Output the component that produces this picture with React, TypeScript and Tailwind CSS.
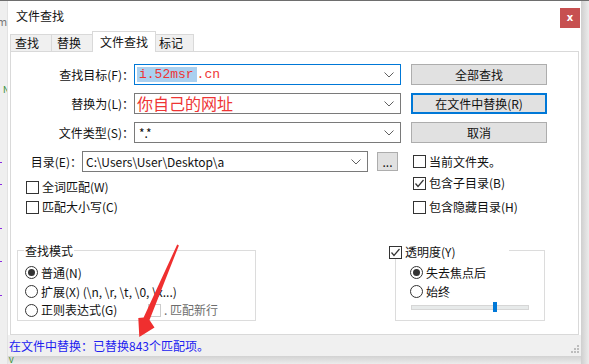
import React from "react";

const FONT = "font-['Noto_Sans_CJK_SC','Noto_Sans',sans-serif]";

function Chevron() {
  return (
    <svg width="10" height="6" viewBox="0 0 10 6" className="shrink-0">
      <polyline points="0.5,0.5 5,5 9.5,0.5" fill="none" stroke="#606060" strokeWidth="1" />
    </svg>
  );
}

function CheckBox({ checked = false, disabled = false }: { checked?: boolean; disabled?: boolean }) {
  return (
    <span
      className={`w-[13px] h-[13px] shrink-0 flex items-center justify-center bg-white border ${
        disabled ? "border-[#cccccc]" : "border-[#333333]"
      }`}
    >
      {checked && (
        <svg width="11" height="11" viewBox="0 0 11 11">
          <polyline points="1.5,5.5 4,8.5 9.5,2" fill="none" stroke="#333333" strokeWidth="1.2" />
        </svg>
      )}
    </span>
  );
}

function Radio({ checked = false }: { checked?: boolean }) {
  return (
    <span className="w-[13px] h-[13px] shrink-0 rounded-full border border-[#333333] bg-white flex items-center justify-center">
      {checked && <span className="w-[7px] h-[7px] rounded-full bg-[#333333]" />}
    </span>
  );
}

function Check({ label, checked = false }: { label: string; checked?: boolean }) {
  return (
    <div className="h-[20px] flex items-center">
      <CheckBox checked={checked} />
      <span className="ml-[3px] text-[12px] leading-[14px] text-[#111]">{label}</span>
    </div>
  );
}

function Combo({
  width,
  focused = false,
  children,
}: {
  width: string;
  focused?: boolean;
  children?: React.ReactNode;
}) {
  return (
    <div
      className={`${width} h-[21px] shrink-0 flex items-center bg-white border ${
        focused ? "border-[#0078d7]" : "border-[#7a7a7a]"
      } pl-[2px] pr-[6px]`}
    >
      <div className="flex-1 min-w-0 flex items-center whitespace-nowrap">{children}</div>
      <Chevron />
    </div>
  );
}

function Btn({ children, active = false }: { children: React.ReactNode; active?: boolean }) {
  return (
    <div
      className={`ml-[10px] w-[136px] h-[21px] shrink-0 bg-[#e1e1e1] flex items-center justify-center text-[12px] leading-[14px] text-[#111] ${
        active ? "border-2 border-[#0078d7]" : "border border-[#adadad]"
      }`}
    >
      {children}
    </div>
  );
}

export default function App() {
  return (
    <div className={`relative w-[589px] h-[364px] overflow-hidden bg-[#ececec] ${FONT}`}>
      <div className="h-px bg-[#6e6e6e]" />
      <div className="flex">
        {/* background editor strip */}
        <div className="relative w-[8px] h-[363px] bg-[#efefef] border-r border-[#e2e2e2] overflow-hidden">
          <span className="absolute left-[-3px] top-[14px] text-[11px] leading-[12px] text-[#777]">m</span>
          <span className="absolute left-[3px] top-[84px] text-[9px] leading-[10px] text-[#2a8a2a]">N</span>
          <span className="absolute left-0 top-[161px] w-[2px] h-[1px] bg-[#8a2be2]" />
          <span className="absolute left-0 top-[183px] w-[2px] h-[1px] bg-[#8a2be2]" />
          <span className="absolute left-0 top-[227px] w-[2px] h-[1px] bg-[#8a2be2]" />
          <span className="absolute left-0 top-[260px] w-[2px] h-[1px] bg-[#8a2be2]" />
          <span className="absolute left-0 top-[294px] w-[2px] h-[1px] bg-[#8a2be2]" />
        </div>

        <div className="flex flex-col">
          {/* dialog */}
          <div className="relative w-[573px] h-[355px] bg-white flex flex-col">
            {/* title bar */}
            <div className="h-[30px] flex items-start justify-between">
              <span className="ml-[8px] mt-[7px] text-[12px] leading-[16px] text-[#111]">文件查找</span>
              <div className="mt-[7px] mr-[1px] w-[20px] h-[20px] bg-[#c75050] flex items-center justify-center text-white text-[10px] font-bold leading-none font-['DejaVu_Sans',sans-serif]">
                x
              </div>
            </div>

            {/* tabs */}
            <div className="h-[20px] flex items-end pl-[2px] text-[12px] leading-[14px] text-[#111]">
              <div className="w-[41px] h-[17px] bg-[#f0f0f0] border-t border-l border-[#d9d9d9] flex items-center pl-[4px]">
                查找
              </div>
              <div className="w-[41px] h-[17px] bg-[#f0f0f0] border-t border-l border-[#d9d9d9] flex items-center pl-[5px]">
                替换
              </div>
              <div className="relative z-10 -mb-px w-[64px] h-[21px] bg-white border-t border-l border-r border-[#d9d9d9] flex items-center pl-[7px]">
                文件查找
              </div>
              <div className="w-[38px] h-[17px] bg-[#f0f0f0] border-t border-r border-[#d9d9d9] flex items-center pl-[3px]">
                标记
              </div>
            </div>

            {/* panel */}
            <div className="ml-[2px] w-[569px] h-[284px] border border-[#d9d9d9] flex flex-col pt-[12px] text-[12px] leading-[14px] text-[#111]">
              <div className="flex flex-col gap-[8px]">
                <div className="flex items-center h-[21px]">
                  <div className="w-[123px] text-right">查找目标(F)：</div>
                  <Combo width="w-[267px]" focused>
                    <span className="font-['Liberation_Mono',monospace] text-[13px] leading-[15px] text-[#ee3535]">
                      <span className="bg-[#aad0ef] pl-[2px] pr-[3px]">i.52msr</span>.cn
                    </span>
                  </Combo>
                  <Btn>全部查找</Btn>
                </div>
                <div className="flex items-center h-[21px]">
                  <div className="w-[123px] text-right">替换为(L)：</div>
                  <Combo width="w-[267px]">
                    <span className="text-[16px] leading-[17px] text-[#ee3535]">你自己的网址</span>
                  </Combo>
                  <Btn active>在文件中替换(R)</Btn>
                </div>
                <div className="flex items-center h-[21px]">
                  <div className="w-[123px] text-right">文件类型(S)：</div>
                  <Combo width="w-[267px]">
                    <span className="pl-[2px]">*.*</span>
                  </Combo>
                  <Btn>取消</Btn>
                </div>
              </div>

              {/* directory row */}
              <div className="mt-[8px] flex items-center h-[21px]">
                <div className="w-[71px] text-right">目录(E)：</div>
                <Combo width="w-[286px]">
                  <span className="pl-[1px]">C:\Users\User\Desktop\a</span>
                </Combo>
                <div className="ml-[9px] w-[21px] h-[19px] bg-[#e1e1e1] border border-[#adadad] flex items-center justify-center text-[12px] leading-none">
                  ...
                </div>
                <div className="ml-[15px]">
                  <Check label="当前文件夹。" />
                </div>
              </div>

              {/* option checkboxes */}
              <div className="flex">
                <div className="w-[402px] pl-[15px] pt-[5px] flex flex-col">
                  <Check label="全词匹配(W)" />
                  <Check label="匹配大小写(C)" />
                </div>
                <div className="pt-[1px] flex flex-col gap-[4px]">
                  <Check label="包含子目录(B)" checked />
                  <Check label="包含隐藏目录(H)" />
                </div>
              </div>

              {/* group boxes */}
              <div className="mt-[33px] flex">
                <div className="relative ml-[6px] w-[239px] h-[71px] border border-[#dcdcdc] pl-[7px] pt-[12px] flex flex-col">
                  <span className="absolute left-[6px] top-[-8px] h-[16px] leading-[16px] bg-white px-[1px]">查找模式</span>
                  <div className="h-[19px] flex items-center">
                    <Radio checked />
                    <span className="ml-[3px]">普通(N)</span>
                  </div>
                  <div className="h-[19px] flex items-center">
                    <Radio />
                    <span className="ml-[3px]">扩展(X) (\n, \r, \t, \0, \x...)</span>
                  </div>
                  <div className="h-[18px] flex items-center">
                    <div className="w-[123px] flex items-center">
                      <Radio />
                      <span className="ml-[3px]">正则表达式(G)</span>
                    </div>
                    <CheckBox disabled />
                    <span className="ml-[3px] text-[#6d6d6d]">. 匹配新行</span>
                  </div>
                </div>

                <div className="relative ml-[139px] w-[150px] h-[71px] border border-[#dcdcdc] pl-[14px] pt-[12px] flex flex-col">
                  <div className="absolute left-[-7px] top-[-6px] w-[120px] h-[14px] bg-white flex items-center">
                    <CheckBox checked />
                    <span className="ml-[3px]">透明度(Y)</span>
                  </div>
                  <div className="h-[19px] flex items-center">
                    <Radio checked />
                    <span className="ml-[3px]">失去焦点后</span>
                  </div>
                  <div className="h-[19px] flex items-center">
                    <Radio />
                    <span className="ml-[3px]">始终</span>
                  </div>
                  <div className="relative mt-[1px] ml-[1px] w-[118px] h-[10px] flex items-center">
                    <div className="w-full h-[5px] bg-[#e7eaea] border border-[#d6d6d6]" />
                    <div className="absolute left-[82px] top-0 w-[4px] h-[10px] bg-[#0078d7]" />
                  </div>
                </div>
              </div>
            </div>

            {/* status bar */}
            <div className="relative h-[21px] bg-[#f0f0f0] flex items-center pl-[1px] text-[12px] leading-[14px] text-[#2020f0]">
              在文件中替换：已替换843个匹配项。
              <div className="absolute right-[2px] bottom-[3px] flex flex-col items-end gap-[1px]">
                <div className="flex gap-[1px]">
                  <span className="w-[2px] h-[2px] bg-[#bdbdbd]" />
                </div>
                <div className="flex gap-[1px]">
                  <span className="w-[2px] h-[2px] bg-[#bdbdbd]" />
                  <span className="w-[2px] h-[2px] bg-[#bdbdbd]" />
                </div>
                <div className="flex gap-[1px]">
                  <span className="w-[2px] h-[2px] bg-[#bdbdbd]" />
                  <span className="w-[2px] h-[2px] bg-[#bdbdbd]" />
                  <span className="w-[2px] h-[2px] bg-[#bdbdbd]" />
                </div>
              </div>
            </div>
          </div>
          <div className="relative h-[8px] bg-gradient-to-b from-[#d2d2d2] to-[#ececec]">
            <span className="absolute left-[1px] top-0 text-[8px] leading-[8px] text-[#2a8a2a]">V</span>
          </div>
        </div>

        <div className="w-[8px] bg-gradient-to-r from-[#cfcfcf] to-[#ececec]" />
      </div>

      {/* red arrow annotation */}
      <svg className="absolute left-0 top-0 pointer-events-none" width="589" height="364" viewBox="0 0 589 364">
        <polygon
          points="177.2,244.6 178.9,245.4 149.5,320 154.5,327.5 139.3,337 138.3,318 143.6,317.4"
          fill="#ef2f2f"
        />
      </svg>
    </div>
  );
}
